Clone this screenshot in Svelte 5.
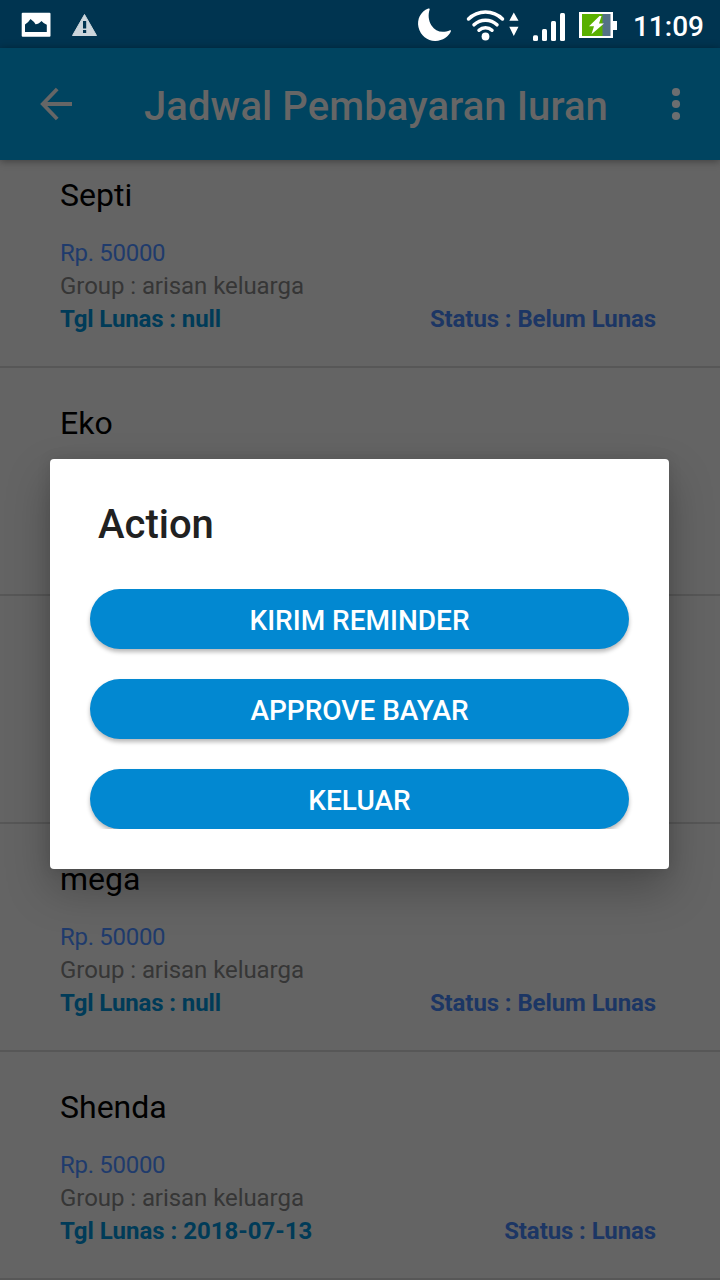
<script>
  const rows = [
    { name: 'Septi', paid: 'null', status: 'Belum Lunas' },
    { name: 'Eko' },
    {},
    { name: 'mega', paid: 'null', status: 'Belum Lunas' },
    { name: 'Shenda', paid: '2018-07-13', status: 'Lunas' }
  ];
  const actions = ['KIRIM REMINDER', 'APPROVE BAYAR', 'KELUAR'];
</script>

<div class="screen">
  <div class="statusbar">
    <svg class="picture" width="30" height="26" viewBox="0 0 30 26">
      <rect x=".7" y=".8" width="28.8" height="24" rx="1" fill="#fff" />
      <path d="M4 20V12.500Q7 11 9.500 7Q13 9.500 14.500 12.300Q17 12.500 20.500 9Q23 12 25.800 12.800V20Z" fill="#003450" />
    </svg>
    <svg class="warning" width="28" height="26" viewBox="0 0 28 26">
      <path d="M13.500 1.500L25.500 22.500H1.500Z" fill="#ccd6dc" stroke="#ccd6dc" stroke-linejoin="round" />
      <path d="M12 8h3.200v7.500H12zM12 17h3.200v3H12z" fill="#003450" />
    </svg>
    <span class="spacer"></span>
    <svg class="moon" width="38" height="38" viewBox="0 0 38 38">
      <path d="M13.300 4.600C5.500 7.500 1.800 15.500 3.500 23.300C5.500 32 13 37.300 20.500 37C27.500 36.700 34 32.500 36 27Q36.300 26 35 26.200C27.500 29.500 20.500 27.700 16.500 21.500C13.200 16.200 13 10.500 14.700 5.300Q14.800 4 13.300 4.600Z" fill="#fff" />
    </svg>
    <svg class="wifi" width="56" height="36" viewBox="0 0 56 36">
      <g fill="none" stroke="#fff" stroke-width="3.500" stroke-linecap="round">
        <path d="M2.500 13A24 24 0 0 1 36.500 13" />
        <path d="M8 18.800A16.500 16.500 0 0 1 31 18.800" />
        <path d="M13 24.200A9.500 9.500 0 0 1 26 24.200" />
      </g>
      <circle cx="19.500" cy="30.500" r="3.900" fill="#fff" />
      <path d="M47.800 6.500L52.500 14.800H43.300ZM43.300 20.700H52.500L47.800 30Z" fill="#fff" />
    </svg>
    <svg class="signal" width="34" height="30" viewBox="0 0 34 30">
      <g fill="#fff">
        <rect x="1" y="23.200" width="5" height="5.800" rx="1.500" />
        <rect x="10" y="17" width="5" height="12" rx="1.500" />
        <rect x="19" y="9" width="5" height="20" rx="1.500" />
        <rect x="28" y="1" width="5" height="28" rx="1.500" />
      </g>
    </svg>
    <svg class="battery" width="40" height="28" viewBox="0 0 40 28">
      <path d="M0 1h34v9h4v9h-4v8H0Z" fill="#fff" />
      <rect x="3" y="3" width="28.500" height="22" fill="#547186" />
      <rect x="3" y="3" width="20.500" height="22" fill="#5ab000" />
      <path d="M20.500 5L10 15.300H15L12.500 23.200L25 12.500H20L22.500 5Z" fill="#fff" />
    </svg>
    <span class="clock">11:09</span>
  </div>

  <header>
    <svg class="back" width="34" height="34" viewBox="0 0 34 34">
      <path d="M18.200 2L3.800 17L18.200 32M3.800 17H33" fill="none" stroke="#666" stroke-width="3.800" />
    </svg>
    <h1>Jadwal Pembayaran Iuran</h1>
    <svg class="more" width="10" height="34" viewBox="0 0 10 34" fill="#6c6e70">
      <circle cx="5" cy="5" r="4.100" />
      <circle cx="5" cy="17" r="4.100" />
      <circle cx="5" cy="29" r="4.100" />
    </svg>
  </header>

  <main>
    {#each rows as row}
      <section class="row">
        {#if row.name}
          <div class="name">{row.name}</div>
        {/if}
        {#if row.status}
          <div class="amount">Rp. 50000</div>
          <div class="group">Group : arisan keluarga</div>
          <div class="foot">
            <span class="paid" class:pending={row.paid === 'null'}>Tgl Lunas : {row.paid}</span>
            <span class="status">Status : {row.status}</span>
          </div>
        {/if}
      </section>
    {/each}
  </main>

  <div class="dialog" role="dialog" aria-label="Action">
    <h2>Action</h2>
    <div class="actions">
      {#each actions as action}
        <button>{action}</button>
      {/each}
    </div>
  </div>
</div>

<style>
  :global(body) {
    margin: 0;
  }
  .screen {
    position: relative;
    width: 720px;
    height: 1280px;
    overflow: hidden;
    display: flex;
    flex-direction: column;
    background: #646464;
    font-family: Roboto, sans-serif;
  }
  svg {
    display: block;
    flex: none;
  }
  .statusbar {
    flex: none;
    box-sizing: border-box;
    height: 48px;
    padding: 0 16px 0 21px;
    display: flex;
    align-items: flex-start;
    background: #003450;
    color: #fff;
  }
  .picture {
    margin-top: 12px;
  }
  .warning {
    margin: 13px 0 0 20px;
  }
  .spacer {
    flex: 1;
  }
  .moon {
    margin: 4px 13px 0 0;
  }
  .wifi {
    margin: 6px 10px 0 0;
  }
  .signal {
    margin: 12px 13px 0 0;
  }
  .battery {
    margin: 11px 14px 0 0;
  }
  .clock {
    font-size: 28px;
    font-weight: 500;
    line-height: 33px;
    margin-top: 10px;
  }
  header {
    flex: none;
    box-sizing: border-box;
    height: 112px;
    padding: 0 39px;
    display: flex;
    align-items: center;
    background: #004460;
    box-shadow: 0 1px 8px rgba(0, 0, 0, 0.4);
    z-index: 1;
  }
  h1 {
    margin: 6px 0 0 71px;
    font-size: 40px;
    line-height: 48px;
    font-weight: 500;
    letter-spacing: 0.09px;
    color: #666;
    white-space: nowrap;
    flex: 1;
  }
  main {
    flex: 1;
    min-height: 0;
    display: flex;
    flex-direction: column;
  }
  .row {
    flex: none;
    box-sizing: border-box;
    height: 228px;
    padding: 36px 64px 0 60px;
    border-bottom: 2px solid #575757;
    font-size: 24px;
    line-height: 33px;
  }
  .row:first-child {
    height: 208px;
    padding-top: 16px;
  }
  .name {
    font-size: 32px;
    line-height: 38px;
    margin-bottom: 23px;
    color: #000;
  }
  .amount {
    color: #1f3b6c;
    letter-spacing: -0.3px;
  }
  .group {
    color: #363636;
    letter-spacing: -0.06px;
  }
  .foot {
    display: flex;
    justify-content: space-between;
    font-weight: 700;
  }
  .paid {
    color: #003b58;
  }
  .pending {
    letter-spacing: -0.12px;
  }
  .status {
    color: #1c3664;
    letter-spacing: -0.09px;
  }
  .dialog {
    position: absolute;
    left: 50px;
    top: 459px;
    width: 619px;
    height: 410px;
    box-sizing: border-box;
    padding: 42px 40px 40px;
    border-radius: 4px;
    background: #fff;
    box-shadow: 0 20px 44px rgba(0, 0, 0, 0.26), 0 0 14px rgba(0, 0, 0, 0.1);
    z-index: 2;
  }
  h2 {
    margin: 0 0 40px 8px;
    font-size: 40px;
    line-height: 48px;
    font-weight: 500;
    color: #212121;
  }
  .actions {
    display: flex;
    flex-direction: column;
    gap: 30px;
    padding: 0 20px;
    margin: 0 -20px;
    overflow: hidden;
  }
  button {
    height: 60px;
    padding: 2px 0 0;
    border: 0;
    border-radius: 30px;
    background: #0288d1;
    color: #fff;
    font: 500 28px/33px Roboto, sans-serif;
    box-shadow: 0 3px 4px rgba(0, 0, 0, 0.28);
  }
</style>
